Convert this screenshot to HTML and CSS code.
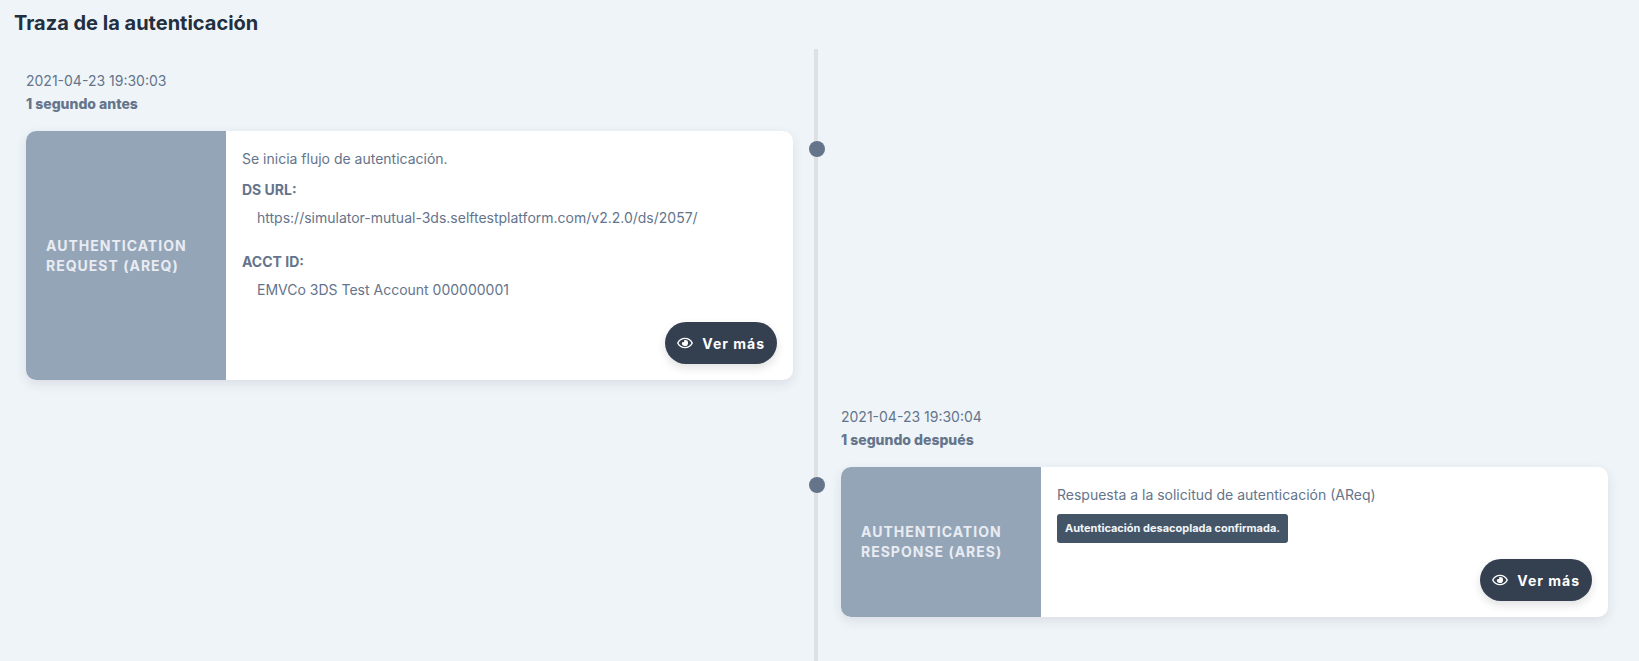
FILE: index.html
```html
<!DOCTYPE html>
<html lang="es">
<head>
<meta charset="utf-8">
<meta name="viewport" content="width=device-width, initial-scale=1">
<title>Traza de la autenticación</title>
<link rel="stylesheet" href="styles.css">
</head>
<body>
<main class="page">
  <h1 class="title">Traza de la autenticación</h1>
  <section class="timeline">
    <article class="entry">
      <header class="stamp">
        <time datetime="2021-04-23T19:30:03">2021-04-23 19:30:03</time>
        <strong>1 segundo antes</strong>
      </header>
      <div class="card">
        <h2 class="side">Authentication request (AReq)</h2>
        <div class="content">
          <p>Se inicia flujo de autenticación.</p>
          <dl class="details">
            <dt>DS URL:</dt>
            <dd>https://simulator-mutual-3ds.selftestplatform.com/v2.2.0/ds/2057/</dd>
            <dt>ACCT ID:</dt>
            <dd>EMVCo 3DS Test Account 000000001</dd>
          </dl>
          <button class="more" type="button">
            <svg class="eye" viewBox="0 0 576 512" aria-hidden="true"><path d="M288 144a110.940 110.940 0 0 0-31.240 5 55.400 55.400 0 0 1 7.240 27 56 56 0 0 1-56 56 55.400 55.400 0 0 1-27-7.240A111.710 111.710 0 1 0 288 144zm284.520 97.400C518.290 135.590 410.930 64 288 64S57.680 135.640 3.480 241.410a32.350 32.350 0 0 0 0 29.190C57.710 376.410 165.070 448 288 448s230.320-71.640 284.520-177.410a32.350 32.350 0 0 0 0-29.190zM288 400c-98.650 0-189.090-55-237.930-144C98.910 167 189.340 112 288 112s189.090 55 237.930 144C477.100 345 386.660 400 288 400z"/></svg>
            <span>Ver más</span>
          </button>
        </div>
      </div>
    </article>
    <article class="entry entry-right">
      <header class="stamp">
        <time datetime="2021-04-23T19:30:04">2021-04-23 19:30:04</time>
        <strong>1 segundo después</strong>
      </header>
      <div class="card">
        <h2 class="side">Authentication response (ARes)</h2>
        <div class="content">
          <p>Respuesta a la solicitud de autenticación (AReq)</p>
          <span class="badge">Autenticación desacoplada confirmada.</span>
          <button class="more" type="button">
            <svg class="eye" viewBox="0 0 576 512" aria-hidden="true"><path d="M288 144a110.940 110.940 0 0 0-31.240 5 55.400 55.400 0 0 1 7.240 27 56 56 0 0 1-56 56 55.400 55.400 0 0 1-27-7.240A111.710 111.710 0 1 0 288 144zm284.520 97.400C518.290 135.590 410.930 64 288 64S57.680 135.640 3.480 241.410a32.350 32.350 0 0 0 0 29.190C57.710 376.410 165.070 448 288 448s230.320-71.640 284.520-177.410a32.350 32.350 0 0 0 0-29.190zM288 400c-98.650 0-189.090-55-237.930-144C98.910 167 189.340 112 288 112s189.090 55 237.930 144C477.100 345 386.660 400 288 400z"/></svg>
            <span>Ver más</span>
          </button>
        </div>
      </div>
    </article>
  </section>
</main>
</body>
</html>
```
FILE: styles.css
```css
* {
  box-sizing: border-box;
}

body {
  margin: 0;
  background: #eff4f8;
  color: #64748b;
  font-family: Inter, "Liberation Sans", sans-serif;
  font-size: 14px;
  line-height: 23px;
}

h1, h2, p, dl, dd {
  margin: 0;
}

.page {
  display: flex;
  flex-direction: column;
  min-height: 100vh;
  padding: 9px 19px 0 14px;
}

.title {
  margin-bottom: 12px;
  color: #222f3e;
  font-size: 20px;
  line-height: 28px;
  font-weight: 700;
}

.timeline {
  position: relative;
  flex: 1;
  display: flex;
  flex-direction: column;
  gap: 25px;
  padding: 20px 12px 44px;
}

/* Central rail */
.timeline::before {
  content: "";
  position: absolute;
  top: 0;
  bottom: 0;
  left: calc(50% - 3px);
  width: 4px;
  background: #dee0e2;
}

.entry {
  width: calc(50% - 24px);
}

.entry-right {
  align-self: flex-end;
}

.stamp {
  display: flex;
  flex-direction: column;
  margin-bottom: 16px;
}

.stamp strong {
  font-weight: 800;
}

.card {
  position: relative;
  display: flex;
  border-radius: 10px;
  background: #fff;
  box-shadow: 0 4px 12px rgba(30, 41, 59, 0.1);
}

/* Marker on the rail */
.card::after {
  content: "";
  position: absolute;
  top: 10px;
  right: -32px;
  width: 16px;
  height: 16px;
  border-radius: 50%;
  background: #64748b;
}

.entry-right .card::after {
  right: auto;
  left: -32px;
}

.side {
  display: flex;
  align-items: center;
  flex: 0 0 200px;
  padding: 20px;
  border-radius: 10px 0 0 10px;
  background: #95a5b8;
  color: #e8ecf2;
  font-size: 14px;
  line-height: 20px;
  font-weight: 700;
  letter-spacing: 1px;
  text-transform: uppercase;
}

.content {
  flex: 1;
  display: flex;
  flex-direction: column;
  align-items: flex-start;
  min-width: 0;
  padding: 16px;
}

.details {
  margin-top: 8px;
}

.details dt {
  margin-bottom: 5px;
  font-weight: 700;
}

.details dd {
  margin: 0 0 21px 15px;
  overflow-wrap: anywhere;
}

.badge {
  margin: 8px 0 16px;
  padding: 3px 8px;
  border-radius: 3px;
  background: #445567;
  color: #f1f5f9;
  font-size: 11px;
  font-weight: 700;
}

.more {
  display: flex;
  align-items: center;
  gap: 9px;
  height: 42px;
  margin-left: auto;
  padding: 0 12px;
  border: 0;
  border-radius: 21px;
  background: #344050;
  color: #fff;
  font: inherit;
  font-weight: 700;
  letter-spacing: 1px;
  box-shadow: 0 4px 10px rgba(0, 0, 0, 0.12);
  cursor: pointer;
}

.eye {
  width: 16px;
  height: 14px;
  fill: currentColor;
}
```
